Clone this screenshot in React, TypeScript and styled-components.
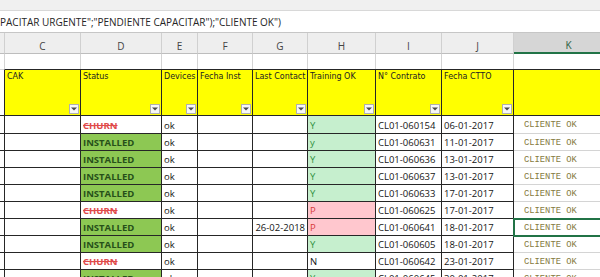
import React from 'react';
import styled, { createGlobalStyle, css } from 'styled-components';

const GlobalStyle = createGlobalStyle`
  html, body { margin: 0; padding: 0; background: #ffffff; }
  body { width: 600px; height: 277px; overflow: hidden; }
`;

const COLS = '5px 76px 81px 36px 55px 55px 68px 66px 72px 110px';
const DARK = '#262626';
const LIGHT = '#d4d4d4';

type Tone = 'plain' | 'installed' | 'churn' | 'yes' | 'pend' | 'client';
type Edge = 'dark' | 'light';

const Window = styled.div`
  width: 600px;
  height: 277px;
  overflow: hidden;
  display: flex;
  flex-direction: column;
  background: #ffffff;
`;

const TopStrip = styled.div`
  flex: none;
  height: 10px;
  background: #f0f0f0;
  border-bottom: 1px solid #d8d8d8;
`;

const FormulaBar = styled.div`
  flex: none;
  height: 21px;
  display: flex;
  align-items: center;
  overflow: hidden;
  white-space: nowrap;
  border-bottom: 1px solid #c6c6c6;
  font-family: "Open Sans", sans-serif;
  font-size: 10px;
  color: #262626;
`;

const Row = styled.div<{ $h: number }>`
  flex: none;
  display: grid;
  grid-template-columns: ${COLS};
  width: max-content;
  height: ${p => p.$h}px;
`;

const ColHead = styled.div<{ $selected?: boolean }>`
  box-sizing: border-box;
  display: flex;
  align-items: center;
  justify-content: center;
  padding-top: 5px;
  background: ${p => (p.$selected ? '#d6d6d6' : '#eeeeee')};
  border-right: 1px solid #d0d0d0;
  border-bottom: ${p => (p.$selected ? '2px solid #217346' : '1px solid #bdbdbd')};
  font-family: "Open Sans", sans-serif;
  font-size: 10px;
  color: ${p => (p.$selected ? '#2a5e40' : '#444444')};
`;

const BlankCell = styled.div`
  box-sizing: border-box;
  border-right: 1px solid ${LIGHT};
  background: #ffffff;
`;

const HeadCell = styled.div<{ $plain?: boolean }>`
  box-sizing: border-box;
  display: flex;
  flex-direction: column;
  justify-content: space-between;
  padding: 2px 1px 1px 2px;
  background: ${p => (p.$plain ? '#ffffff' : '#ffff00')};
  border-top: 1px solid ${p => (p.$plain ? LIGHT : DARK)};
  border-right: 1px solid ${DARK};
  border-bottom: 1px solid ${DARK};
  font-family: "DejaVu Sans", sans-serif;
  font-size: 8px;
  line-height: 10px;
  color: #222222;
  white-space: nowrap;
  overflow: hidden;
`;

const FilterButton = styled.div`
  box-sizing: border-box;
  align-self: flex-end;
  width: 10px;
  height: 10px;
  display: flex;
  align-items: center;
  justify-content: center;
  background: #f7f7f7;
  border: 1px solid #b0b0b0;
`;

const toneCss: Record<Tone, ReturnType<typeof css>> = {
  plain: css`color: #141414;`,
  installed: css`
    background: #8dc853;
    color: #27501a;
    font-weight: 700;
  `,
  churn: css`
    color: #e04b4b;
    font-weight: 700;
    text-decoration: line-through;
  `,
  yes: css`
    background: #c6efce;
    color: #2f9040;
  `,
  pend: css`
    background: #ffc7ce;
    color: #d83a3a;
  `,
  client: css`
    font-family: "Liberation Mono", monospace;
    font-size: 8.8px;
    color: #857a40;
    padding-left: 10px;
  `,
};

const Cell = styled.div<{ $edge?: Edge; $tone?: Tone; $align?: 'left' | 'right'; $selected?: boolean }>`
  box-sizing: border-box;
  display: flex;
  align-items: center;
  justify-content: ${p => (p.$align === 'right' ? 'flex-end' : 'flex-start')};
  padding: 1px 2px 0 2px;
  overflow: hidden;
  white-space: nowrap;
  background: #ffffff;
  border-right: 1px solid ${p => (p.$edge === 'light' ? LIGHT : DARK)};
  border-bottom: 1px solid ${p => (p.$edge === 'light' ? LIGHT : DARK)};
  font-family: "Open Sans", sans-serif;
  font-size: 9.5px;
  ${p => toneCss[p.$tone ?? 'plain']}
  ${p =>
    p.$selected &&
    css`
      position: relative;
      z-index: 1;
      outline: 2px solid #217346;
      outline-offset: -1px;
    `}
`;

const Caret = () => (
  <svg width="6" height="4" viewBox="0 0 6 4">
    <polygon points="0,0.5 6,0.5 3,3.5" fill="#4a4a4a" />
  </svg>
);

type Status = 'churn' | 'installed';
type Train = 'Y' | 'y' | 'P' | 'N';

interface DataRow {
  status: Status;
  train: Train;
  contrato: string;
  fecha: string;
  last?: string;
  selected?: boolean;
}

const rows: DataRow[] = [
  { status: 'churn', train: 'Y', contrato: 'CL01-060154', fecha: '06-01-2017' },
  { status: 'installed', train: 'y', contrato: 'CL01-060631', fecha: '11-01-2017' },
  { status: 'installed', train: 'Y', contrato: 'CL01-060636', fecha: '13-01-2017' },
  { status: 'installed', train: 'Y', contrato: 'CL01-060637', fecha: '13-01-2017' },
  { status: 'installed', train: 'Y', contrato: 'CL01-060633', fecha: '17-01-2017' },
  { status: 'churn', train: 'P', contrato: 'CL01-060625', fecha: '17-01-2017' },
  { status: 'installed', train: 'P', contrato: 'CL01-060641', fecha: '18-01-2017', last: '26-02-2018', selected: true },
  { status: 'installed', train: 'Y', contrato: 'CL01-060605', fecha: '18-01-2017' },
  { status: 'churn', train: 'N', contrato: 'CL01-060642', fecha: '23-01-2017' },
  { status: 'installed', train: 'Y', contrato: 'CL01-060645', fecha: '30-01-2017' },
];

const letters = ['', 'C', 'D', 'E', 'F', 'G', 'H', 'I', 'J', 'K'];
const headers = ['CAK', 'Status', 'Devices', 'Fecha Inst', 'Last Contact', 'Training OK', 'N° Contrato', 'Fecha CTTO', ''];

const trainTone = (t: Train): Tone => (t === 'Y' || t === 'y' ? 'yes' : t === 'P' ? 'pend' : 'plain');

export default function App() {
  return (
    <>
      <GlobalStyle />
      <Window>
        <TopStrip />
        <FormulaBar>PACITAR URGENTE";"PENDIENTE CAPACITAR");"CLIENTE OK")</FormulaBar>
        <Row $h={21}>
          {letters.map((l, i) => (
            <ColHead key={i} $selected={l === 'K'}>
              {l}
            </ColHead>
          ))}
        </Row>
        <Row $h={15}>
          {letters.map((_, i) => (
            <BlankCell key={i} />
          ))}
        </Row>
        <Row $h={47}>
          <HeadCell $plain />
          {headers.map((h, i) => (
            <HeadCell key={i}>
              <span>{h}</span>
              <FilterButton>
                <Caret />
              </FilterButton>
            </HeadCell>
          ))}
        </Row>
        {rows.map((r, i) => (
          <Row key={i} $h={i === 0 ? 18 : 17}>
            <Cell />
            <Cell />
            <Cell $tone={r.status}>{r.status === 'churn' ? 'CHURN' : 'INSTALLED'}</Cell>
            <Cell>ok</Cell>
            <Cell />
            <Cell $align="right">{r.last ?? ''}</Cell>
            <Cell $tone={trainTone(r.train)}>{r.train}</Cell>
            <Cell>{r.contrato}</Cell>
            <Cell>{r.fecha}</Cell>
            <Cell $edge="light" $tone="client" $selected={r.selected}>
              CLIENTE OK
            </Cell>
          </Row>
        ))}
      </Window>
    </>
  );
}
